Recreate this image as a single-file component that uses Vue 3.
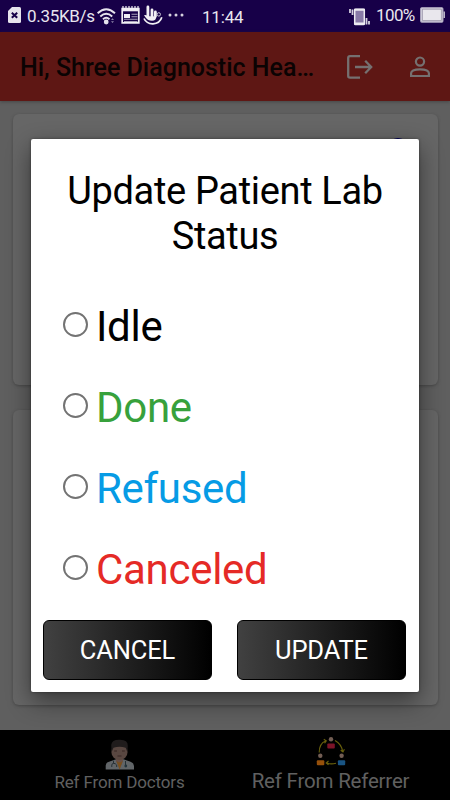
<script setup>
const options = [
  { name: 'Idle', tone: 'idle' },
  { name: 'Done', tone: 'done' },
  { name: 'Refused', tone: 'refused' },
  { name: 'Canceled', tone: 'canceled' },
]
</script>

<template>
  <div class="screen">
    <div class="statusbar">
      <svg class="sim" width="13" height="16" viewBox="0 0 13 16">
        <path d="M4 0H11.5Q13 0 13 1.5V14.5Q13 16 11.5 16H1.5Q0 16 0 14.5V4Z" fill="#e6e3ec" />
        <path d="M3.8 5.8L9.2 10.8M9.2 5.8L3.8 10.8" stroke="#170048" stroke-width="2" />
      </svg>
      <span class="speed">0.35KB/s</span>
      <svg class="wifi" width="19" height="17" viewBox="0 0 19 17">
        <g fill="none" stroke="#e6e3ec" stroke-width="1.9">
          <path d="M.6 5.2Q9.2-2.8 18 5.2" />
          <path d="M3.3 8.5Q9.2 2.9 15.2 8.5" />
          <path d="M6 11.3Q9.2 8.3 12.5 11.3" />
        </g>
        <circle cx="9.2" cy="14" r="2.4" fill="#e6e3ec" />
        <path d="M14 12l1.5-1.7 1.5 1.7zM14 13.3l1.5 1.7 1.5-1.7z" fill="#8c83a8" />
      </svg>
      <svg class="news" width="19" height="18" viewBox="0 0 19 18">
        <path d="M1.2 2.5H17.8V16.8H1.2Z" fill="none" stroke="#f1eff4" stroke-width="1.7" />
        <path d="M1 2H18V5.3H1Z" fill="#f1eff4" />
        <path d="M2 0V3M5 0V3M8 0V3M11 0V3M14 0V3M17 0V3" stroke="#f1eff4" stroke-width="1.2" />
        <path d="M3 8H9V12H3Z" fill="#f1eff4" />
        <path d="M10.5 8.3H16.5M10.5 10.7H16.5M3 13.3H16.5M3 15.5H16.5" stroke="#aaa3ba" stroke-width="1.1" />
      </svg>
      <svg class="hand" width="20" height="20" viewBox="0 0 20 20">
        <path d="M4.9 2V12M9 5V11M12.4 7V11" stroke="#f1eff4" stroke-width="2.8" stroke-linecap="round" />
        <path d="M1 10.2Q3.1 9.7 5 11.2H13.5Q13.2 15.8 9 15.8Q4.5 15.5 3 13Z" fill="#f1eff4" />
        <path d="M1 13.5Q3.5 19 10 18.8Q17 18.5 18.8 12.3" fill="none" stroke="#f1eff4" stroke-width="1.7" />
        <circle cx="15.8" cy="9.4" r="1.7" fill="none" stroke="#c9c4d5" stroke-width="1" />
      </svg>
      <svg class="dots" width="17" height="4" viewBox="0 0 17 4">
        <g fill="#d6d2df"><circle cx="2" cy="2" r="1.5" /><circle cx="8" cy="2" r="1.5" /><circle cx="14" cy="2" r="1.5" /></g>
      </svg>
      <span class="clock">11:44</span>
      <svg class="vibrate" width="21" height="18" viewBox="0 0 21 18">
        <rect x="5.7" y="1.2" width="9.6" height="15.3" rx=".8" fill="#897aa7" stroke="#eeebf2" stroke-width="1.5" />
        <path d="M5 1.8H16M5 15.5H16" stroke="#eeebf2" stroke-width="2" />
        <path d="M1 1V5M3.5 1.5V7M17.5 10V16.5M20 13V16.5" stroke="#d6d1df" stroke-width="1.8" />
      </svg>
      <span class="percent">100%</span>
      <svg class="battery" width="25" height="16" viewBox="0 0 25 16">
        <rect x=".8" y=".8" width="22" height="14.2" rx="1" fill="#e9e7ed" stroke="#b9b3c8" stroke-width="1.3" />
        <path d="M2.4 2.2H21.4V13.6H2.4Z" fill="none" stroke="#77708c" stroke-width=".6" />
        <path d="M24.2 4.6V11" stroke="#d5d1dc" stroke-width="1.3" />
      </svg>
    </div>

    <header class="appbar">
      <h1>Hi, Shree Diagnostic Hea…</h1>
      <svg class="logout" width="26" height="24" viewBox="0 0 26 24">
        <path d="M13 1.2H3Q1.2 1.2 1.2 3V21Q1.2 22.6 3 22.6H13" fill="none" stroke="#757070" stroke-width="2.3" />
        <path d="M8 12H24M18.2 5.8L24.2 12L18.2 18.2" fill="none" stroke="#757070" stroke-width="2.3" />
      </svg>
      <svg class="person" width="20" height="22" viewBox="0 0 20 22">
        <circle cx="10" cy="5.6" r="4.1" fill="none" stroke="#757070" stroke-width="2.2" />
        <path d="M1.1 20V17.2Q1.4 13.4 10 13.4T18.9 17.2V20Z" fill="none" stroke="#757070" stroke-width="2.2" />
      </svg>
    </header>

    <main class="content">
      <section class="card first"><span class="badge"></span></section>
      <section class="card second"></section>
    </main>

    <nav class="tabs">
      <div class="tab doctors">
        <svg width="30" height="31" viewBox="0 0 30 31">
          <path d="M.7 30.5V26.5Q1 23.5 4 22.7L11 20.2H18.5L25.5 22.7Q28.7 23.8 29 27V30.5Z" fill="#616568" />
          <path d="M11 18H18V22.2L14.6 29.8L11 22.2Z" fill="#675048" />
          <path d="M11.5 22L14.6 30.5L17.7 22L15.8 23.3H13.3Z" fill="#79501f" />
          <ellipse cx="14.5" cy="13" rx="8.1" ry="8" fill="#594741" />
          <path d="M6.6 13L6.2 6Q6.8 .7 14 .7Q23.1 .3 22.8 7L22.4 13L20.7 8.7Q14.5 6.6 8.5 8.7Z" fill="#201c1c" />
          <path d="M9.2 12H12M17 12H19.8M12.5 17H16.5" stroke="#33231f" stroke-width=".9" />
          <path d="M8.5 21.8V24.5M6.8 28V26Q7 24.3 8.7 24.3T11.7 26V28M20.5 22V27" fill="none" stroke="#263035" stroke-width="1" />
          <circle cx="20.8" cy="27" r="1.4" fill="#24343b" />
        </svg>
        <span>Ref From Doctors</span>
      </div>
      <div class="tab referrer">
        <svg width="30" height="31" viewBox="0 0 30 31">
          <g fill="none" stroke="#69600c" stroke-width="1.1">
            <path d="M3.2 16.5Q3.2 7.5 9.5 5M7.8 3.2L10.3 4.8L8.6 7.2" />
            <path d="M19 4.5Q25.5 8 26.7 15.5M24.7 14.2L27 16L28.4 13.3" />
            <path d="M20 27.2Q15 28.7 11 27M12.5 25L10.2 27L12.5 28.8" />
          </g>
          <g fill="#735e54"><circle cx="15" cy="3.3" r="2.2" /><circle cx="4.3" cy="19.7" r="2.2" /><circle cx="25.6" cy="19.7" r="2.2" /></g>
          <rect x="11.3" y="7.6" width="7.5" height="5" rx="1" fill="#7d1428" />
          <rect x=".8" y="24.3" width="7.5" height="5" rx="1" fill="#96500a" />
          <rect x="21.9" y="24.3" width="7.3" height="5" rx="1" fill="#195483" />
        </svg>
        <span>Ref From Referrer</span>
      </div>
    </nav>

    <div class="dialog" role="dialog">
      <h2>Update Patient Lab<br />Status</h2>
      <div class="options">
        <label v-for="option in options" :key="option.name" class="option" :class="option.tone">
          <span class="radio"></span><span class="name">{{ option.name }}</span>
        </label>
      </div>
      <div class="actions">
        <button>CANCEL</button>
        <button>UPDATE</button>
      </div>
    </div>
  </div>
</template>

<style>
body { margin: 0; overflow: hidden; }
</style>

<style scoped>
* { box-sizing: border-box; }
.screen { position: relative; width: 450px; height: 800px; overflow: hidden; display: flex; flex-direction: column; background: #5f5f5f; font-family: Roboto, sans-serif; }
svg { display: block; flex: none; }
.statusbar { height: 32px; flex: none; display: flex; align-items: flex-start; padding-left: 8px; background: #170048; color: #e9e6ef; font-size: 17px; line-height: 20px; white-space: nowrap; }
.sim { margin-top: 7px; }
.speed { width: 70px; margin: 6px 0 0 6px; letter-spacing: -0.3px; }
.wifi { margin-top: 8px; }
.news { margin: 6px 0 0 5px; }
.hand { margin: 5px 0 0 3px; }
.dots { margin: 13px 0 0 5px; }
.clock { width: 44px; margin: 7px 0 0 17px; letter-spacing: -0.2px; }
.vibrate { margin: 8px 0 0 103px; }
.percent { width: 40px; margin: 5px 0 0 6px; letter-spacing: -0.6px; }
.battery { margin: 7px 0 0 4px; }
.appbar { height: 69px; flex: none; display: flex; align-items: center; padding: 0 20px; background: #5e1714; box-shadow: 0 1px 3px #3338; }
h1 { width: 327px; margin: 2px 0 0; color: #0b0303; font-size: 25px; font-weight: 500; line-height: 30px; white-space: nowrap; }
.logout { margin-top: 1px; }
.person { margin: 1px 0 0 37px; }
.content { height: 629px; flex: none; padding: 13px 12.5px 24px; display: flex; flex-direction: column; gap: 25px; }
.card { border-radius: 6px; background: #666; box-shadow: 0 1px 3px #3338; }
.first { height: 271px; position: relative; }
.second { height: 295px; }
.badge { position: absolute; left: 375px; top: 23.5px; width: 20px; height: 20px; border-radius: 50%; background: #00005f; }
.tabs { height: 70px; flex: none; display: flex; background: #000; color: #606060; }
.tab { display: flex; flex-direction: column; align-items: center; white-space: nowrap; }
.doctors { width: 239px; padding-top: 9px; font-size: 17px; line-height: 22px; letter-spacing: -0.15px; }
.doctors span { margin-top: 1px; }
.referrer { width: 183px; padding-top: 6px; font-size: 20.5px; line-height: 24px; letter-spacing: -0.2px; }
.referrer span { margin-top: 2px; }
.dialog { position: absolute; left: 31px; top: 139px; width: 388px; height: 553px; border-radius: 2px; background: #fff; box-shadow: 0 9px 24px #0007, 0 0 3px #0006; display: flex; flex-direction: column; }
h2 { margin: 30px 0 0; color: #000; font-size: 38px; font-weight: 400; line-height: 44.5px; letter-spacing: -0.33px; text-align: center; white-space: nowrap; }
.options { margin-top: 26px; }
.option { display: flex; height: 80.9px; padding-left: 32px; align-items: center; font-size: 42px; line-height: 50px; letter-spacing: -0.3px; }
.radio { width: 25px; height: 25px; flex: none; border: 2.3px solid #737373; border-radius: 50%; }
.name { margin: 5px 0 0 8px; }
.idle { color: #000; }
.done { color: #37a13c; }
.refused { color: #069be5; }
.canceled { color: #e52a26; }
.actions { display: flex; gap: 25px; padding: 12.4px 12px 0; }
button { width: 169px; height: 60px; padding: 1px 0 0; border: 1px solid #000; border-radius: 6px; background: linear-gradient(90deg, #414141, #000); color: #fff; font: 400 25.5px/30px Roboto, sans-serif; letter-spacing: -0.15px; }
</style>
